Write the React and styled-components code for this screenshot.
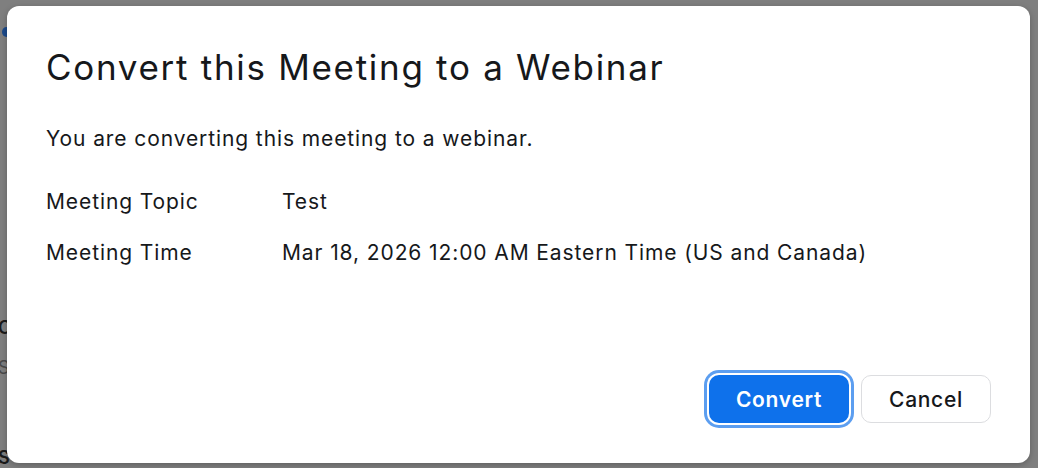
import React from 'react';
import styled, { createGlobalStyle } from 'styled-components';

const GlobalStyle = createGlobalStyle`
  html, body {
    margin: 0;
    padding: 0;
    width: 1038px;
    height: 468px;
    overflow: hidden;
    background: #7f7f7f;
    font-family: Inter, "Noto Sans", "Liberation Sans", sans-serif;
  }
`;

// page that sits under the modal, dimmed by the backdrop
const Page = styled.div`
  position: relative;
  width: 1038px;
  height: 468px;
  background: #7f7f7f;
  overflow: hidden;
`;

const BehindColumn = styled.div`
  display: flex;
  flex-direction: column;
  align-items: flex-start;
  margin-left: -2px;
`;

const BehindDot = styled.span`
  width: 9px;
  height: 10px;
  margin-top: 27px;
  margin-left: 4px;
  border-radius: 50%;
  background: #1c4a8a;
`;

const BehindText = styled.span`
  font-size: 18px;
  line-height: 18px;
  font-weight: ${p => (p.bold ? 600 : 400)};
  color: ${p => p.tone};
  margin-top: ${p => p.top}px;
`;

const Dialog = styled.div`
  position: absolute;
  left: 7px;
  top: 6px;
  width: 1023px;
  height: 457px;
  box-sizing: border-box;
  background: #fff;
  border-radius: 12px;
  box-shadow: 0 2px 6px rgba(0, 0, 0, 0.25);
  padding: 40px 39px 40px 39px;
  display: flex;
  flex-direction: column;
  color: #16181b;
`;

const Title = styled.h1`
  margin: 0;
  font-size: 35px;
  line-height: 42px;
  font-weight: 400;
  letter-spacing: 1.7px;
`;

const Lead = styled.p`
  margin: 38px 0 0;
  font-size: 21px;
  line-height: 26px;
  letter-spacing: 0.9px;
`;

const Details = styled.div`
  margin-top: 37px;
  display: grid;
  grid-template-columns: 236px auto;
  row-gap: 25px;
  font-size: 21px;
  line-height: 26px;
  letter-spacing: 0.9px;
`;

const Footer = styled.div`
  margin-top: auto;
  display: flex;
  justify-content: flex-end;
  gap: 12px;
`;

const Button = styled.button`
  height: 48px;
  box-sizing: border-box;
  border-radius: 10px;
  font-family: inherit;
  font-size: 21px;
  letter-spacing: 0.7px;
  cursor: pointer;
  ${p =>
    p.primary
      ? `
    width: 140px;
    background: #0e71eb;
    color: #fff;
    border: none;
    font-weight: 600;
    box-shadow: 0 0 0 2px #fff, 0 0 0 5px #5c9ef0;
  `
      : `
    width: 130px;
    background: #fff;
    color: #16181b;
    border: 1px solid #dcdde0;
    font-weight: 500;
  `}
`;

export default function App() {
  return (
    <>
      <GlobalStyle />
      <Page>
        <BehindColumn>
          <BehindDot />
          <BehindText tone="#1a1a1a" bold top={282}>C</BehindText>
          <BehindText tone="#4a4a4a" top={22}>S</BehindText>
          <BehindText tone="#1a1a1a" bold top={72}>S</BehindText>
        </BehindColumn>
        <Dialog role="dialog">
          <Title>Convert this Meeting to a Webinar</Title>
          <Lead>You are converting this meeting to a webinar.</Lead>
          <Details>
            <span>Meeting Topic</span>
            <span>Test</span>
            <span>Meeting Time</span>
            <span>Mar 18, 2026 12:00 AM Eastern Time (US and Canada)</span>
          </Details>
          <Footer>
            <Button primary>Convert</Button>
            <Button>Cancel</Button>
          </Footer>
        </Dialog>
      </Page>
    </>
  );
}
